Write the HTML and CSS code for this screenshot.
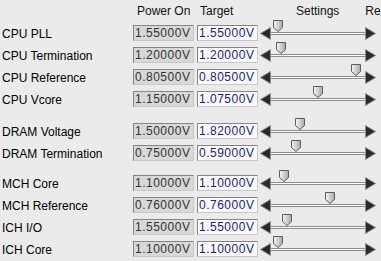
FILE: index.html
```html
<!DOCTYPE html>
<html>
<head>
<meta charset="utf-8">
<link rel="stylesheet" href="styles.css">
</head>
<body>
<svg class="defs" aria-hidden="true">
  <defs>
    <linearGradient id="thg" x1="0" y1="0" x2="1" y2="0">
      <stop offset="0" stop-color="#f6f6f6"/>
      <stop offset="1" stop-color="#a9a9a9"/>
    </linearGradient>
    <g id="trk">
      <rect x="271" y="10" width="94" height="1" fill="#8e8e8e"/>
      <rect x="271" y="11" width="94" height="1" fill="#fbfbfb"/>
      <rect x="271" y="12" width="94" height="1" fill="#8e8e8e"/>
      <polygon points="260.5,11.5 270.5,5.5 270.5,17.5" fill="#2a2a2a" stroke="#8c8c8c" stroke-width="1"/>
      <polygon points="365.5,5.5 375.5,11.5 365.5,17.5" fill="#2a2a2a" stroke="#8c8c8c" stroke-width="1"/>
    </g>
    <polygon id="thb" points="-4.5,-1.5 4.5,-1.5 4.5,5.5 0,9.5 -4.5,5.5" fill="url(#thg)" stroke="#5c5c5c" stroke-width="1"/>
  </defs>
</svg>

<div class="panel">
  <div class="row head">
    <span></span>
    <span class="h-pow">Power On</span>
    <span class="h-tgt">Target</span>
    <span class="h-set"><span class="set">Settings</span><span class="re">Re</span></span>
  </div>

  <div class="group">
    <div class="row"><span class="lbl">CPU PLL</span><span class="box pow">1.55000V</span><span class="box tgt">1.55000V</span>
      <svg class="slider" viewBox="261 0 120 22"><use href="#trk"/><use href="#thb" x="278" y="0"/></svg></div>
    <div class="row"><span class="lbl">CPU Termination</span><span class="box pow">1.20000V</span><span class="box tgt">1.20000V</span>
      <svg class="slider" viewBox="261 0 120 22"><use href="#trk"/><use href="#thb" x="281" y="0"/></svg></div>
    <div class="row"><span class="lbl">CPU Reference</span><span class="box pow">0.80500V</span><span class="box tgt">0.80500V</span>
      <svg class="slider" viewBox="261 0 120 22"><use href="#trk"/><use href="#thb" x="356" y="0"/></svg></div>
    <div class="row"><span class="lbl">CPU Vcore</span><span class="box pow">1.15000V</span><span class="box tgt">1.07500V</span>
      <svg class="slider" viewBox="261 0 120 22"><use href="#trk"/><use href="#thb" x="318" y="0"/></svg></div>
  </div>

  <div class="group g2">
    <div class="row"><span class="lbl">DRAM Voltage</span><span class="box pow">1.50000V</span><span class="box tgt">1.82000V</span>
      <svg class="slider" viewBox="261 0 120 22"><use href="#trk"/><use href="#thb" x="300" y="0"/></svg></div>
    <div class="row"><span class="lbl">DRAM Termination</span><span class="box pow">0.75000V</span><span class="box tgt">0.59000V</span>
      <svg class="slider" viewBox="261 0 120 22"><use href="#trk"/><use href="#thb" x="296" y="0"/></svg></div>
  </div>

  <div class="group g3">
    <div class="row"><span class="lbl">MCH Core</span><span class="box pow">1.10000V</span><span class="box tgt">1.10000V</span>
      <svg class="slider" viewBox="261 0 120 22"><use href="#trk"/><use href="#thb" x="284" y="0"/></svg></div>
    <div class="row"><span class="lbl">MCH Reference</span><span class="box pow">0.76000V</span><span class="box tgt">0.76000V</span>
      <svg class="slider" viewBox="261 0 120 22"><use href="#trk"/><use href="#thb" x="330" y="0"/></svg></div>
    <div class="row"><span class="lbl">ICH I/O</span><span class="box pow">1.55000V</span><span class="box tgt">1.55000V</span>
      <svg class="slider" viewBox="261 0 120 22"><use href="#trk"/><use href="#thb" x="287" y="0"/></svg></div>
    <div class="row"><span class="lbl">ICH Core</span><span class="box pow">1.10000V</span><span class="box tgt">1.10000V</span>
      <svg class="slider" viewBox="261 0 120 22"><use href="#trk"/><use href="#thb" x="278" y="0"/></svg></div>
  </div>
</div>
</body>
</html>
```

FILE: styles.css
```css
html, body {
  margin: 0;
  padding: 0;
  background: #ebebeb;
}
body {
  width: 381px;
  height: 261px;
  overflow: hidden;
  font-family: "Liberation Sans", Arial, sans-serif;
  font-size: 12px;
  color: #000;
}
.defs {
  position: absolute;
  width: 0;
  height: 0;
  overflow: hidden;
}
.panel {
  display: flex;
  flex-direction: column;
}
.group {
  display: flex;
  flex-direction: column;
}
.g2 { margin-top: 10px; }
.g3 { margin-top: 8px; }
.row {
  display: grid;
  grid-template-columns: 130px 61px 61px 120px;
  column-gap: 3px;
  height: 22px;
  align-items: start;
}
.head {
  line-height: 22px;
  color: #111;
}
.h-pow { padding-left: 4px; }
.h-tgt { padding-left: 3px; }
.h-set {
  display: flex;
  white-space: nowrap;
}
.set { margin-left: 35px; }
.re { margin-left: 26px; }
.lbl {
  padding-left: 2px;
  padding-top: 1px;
  line-height: 22px;
  white-space: nowrap;
}
.box {
  box-sizing: border-box;
  margin-top: 3px;
  height: 16px;
  line-height: 14px;
  padding-left: 1px;
  border: 1px solid;
  border-color: #858585 #c9c9c9 #c9c9c9 #858585;
  letter-spacing: 0.5px;
  white-space: nowrap;
  overflow: hidden;
}
.pow {
  background: #d8d8d8;
  color: #333;
}
.tgt {
  background: #fbfbff;
  color: #1c1c70;
}
.slider {
  display: block;
  width: 120px;
  height: 22px;
  overflow: visible;
}
```
